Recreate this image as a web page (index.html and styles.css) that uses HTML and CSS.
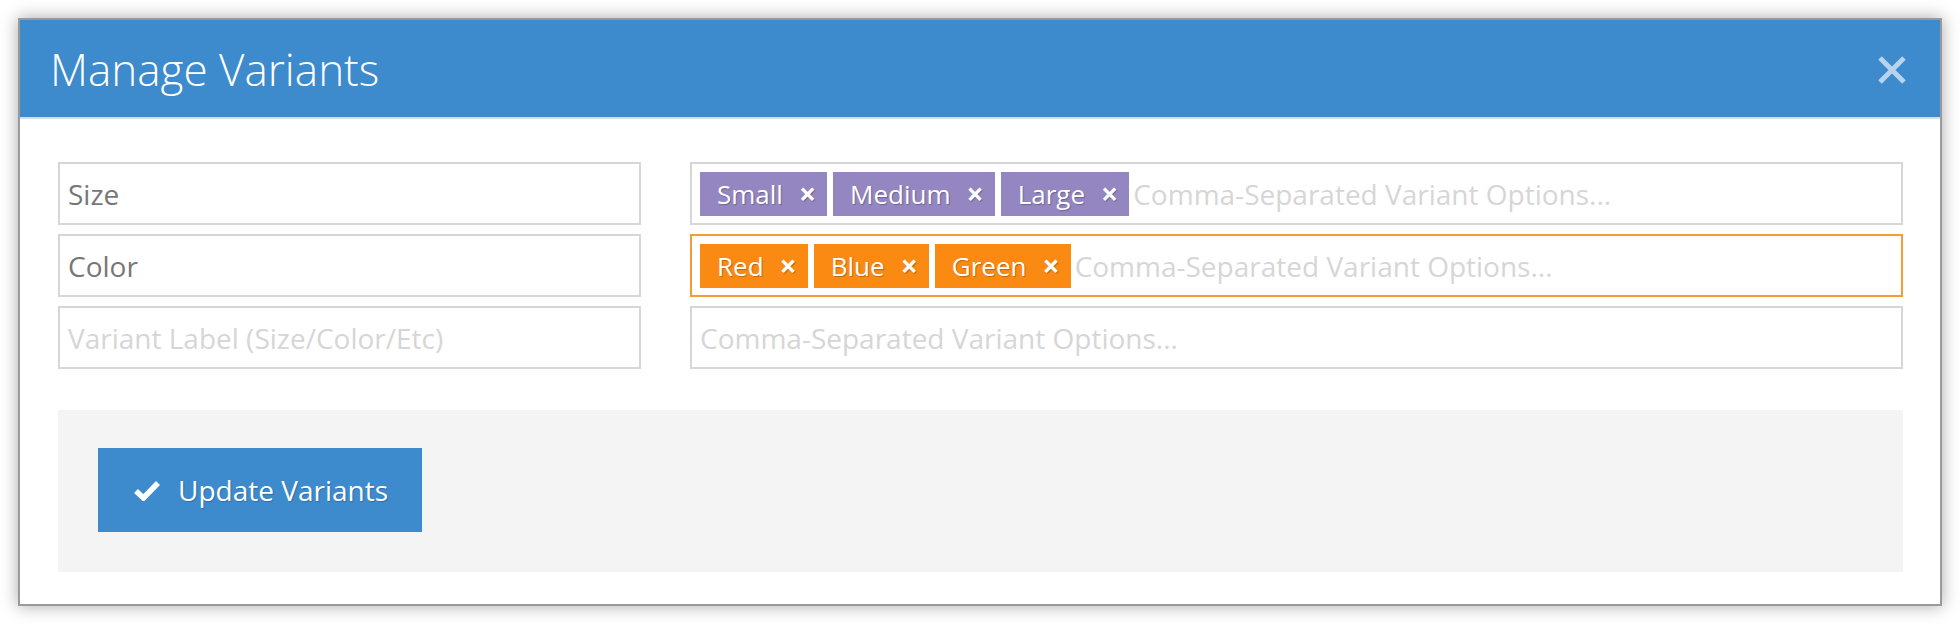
FILE: index.html
```html
<!DOCTYPE html>
<html lang="en">
<head>
  <meta charset="UTF-8">
  <title>Manage Variants</title>
  <link rel="stylesheet" href="styles.css">
</head>
<body>
  <div class="modal">
    <header class="modal-header">
      <h1>Manage Variants</h1>
      <button class="close-btn" aria-label="Close">
        <svg width="30" height="30" viewBox="0 0 30 30"><path d="M3 3 L27 27 M27 3 L3 27" stroke="currentColor" stroke-width="5" stroke-linecap="butt"/></svg>
      </button>
    </header>

    <div class="modal-body">
      <div class="variant-rows">
        <div class="field">Size</div>
        <div class="field tags">
          <span class="tag purple">Small <b>×</b></span>
          <span class="tag purple">Medium <b>×</b></span>
          <span class="tag purple">Large <b>×</b></span>
          <span class="placeholder">Comma-Separated Variant Options...</span>
        </div>

        <div class="field">Color</div>
        <div class="field tags focused">
          <span class="tag orange">Red <b>×</b></span>
          <span class="tag orange">Blue <b>×</b></span>
          <span class="tag orange">Green <b>×</b></span>
          <span class="placeholder">Comma-Separated Variant Options...</span>
        </div>

        <div class="field"><span class="placeholder">Variant Label (Size/Color/Etc)</span></div>
        <div class="field"><span class="placeholder">Comma-Separated Variant Options...</span></div>
      </div>

      <div class="actions">
        <button class="update-btn">
          <svg width="26" height="22" viewBox="0 0 26 22"><path d="M2 12 L9.5 19 L24 4" fill="none" stroke="currentColor" stroke-width="5.5"/></svg>
          Update Variants
        </button>
      </div>
    </div>
  </div>
</body>
</html>
```

FILE: styles.css
```css
body {
  margin: 0;
  padding: 18px;
  background: #fff;
  font-family: 'Open Sans', 'Liberation Sans', sans-serif;
}
.modal {
  border: 2px solid #9a9a9a;
  background: #fff;
  box-shadow: 0 0 16px rgba(0,0,0,0.35);
}
.modal-header {
  background: #3d8acd;
  height: 97px;
  border-bottom: 2px solid #dcdcdc;
  display: flex;
  align-items: center;
  justify-content: space-between;
  padding: 0 33px 0 30px;
}
.modal-header h1 {
  margin: 0;
  color: #fff;
  font-weight: 300;
  font-size: 44px;
}
.close-btn {
  background: none;
  border: none;
  padding: 0;
  color: #b7d3ed;
  display: flex;
  margin-top: 2px;
}
.modal-body { padding: 43px 37px 32px 38px; }
.variant-rows {
  display: grid;
  grid-template-columns: 583px 1fr;
  column-gap: 49px;
  row-gap: 9px;
}
.field {
  height: 63px;
  box-sizing: border-box;
  border: 2px solid #d6d6d6;
  padding: 0 8px;
  display: flex;
  align-items: center;
  gap: 6px;
  font-size: 28px;
  color: #777;
  white-space: nowrap;
  overflow: hidden;
}
.field.focused { border-color: #f59b38; }
.placeholder { color: #d6d6d6; }
.tag {
  height: 44px;
  display: flex;
  align-items: center;
  padding: 0 11px 0 17px;
  color: #fff;
  font-size: 26px;
  text-shadow: 1px 1px 1px rgba(0,0,0,0.25);
}
.tag b { font-weight: 700; font-size: 30px; margin-left: 16px; line-height: 1; }
.tag.purple { background: #9386c1; }
.tag.orange { background: #fb8a13; }
.tags .placeholder { margin-left: -2px; }
.actions {
  margin-top: 41px;
  background: #f4f4f4;
  padding: 38px 40px 40px;
}
.update-btn {
  background: #3d8acd;
  border: none;
  color: #fff;
  width: 324px;
  height: 84px;
  font-family: inherit;
  font-size: 28px;
  display: flex;
  align-items: center;
  gap: 18px;
  padding: 0 0 0 36px;
  text-shadow: 1px 1px 1px rgba(0,0,0,0.2);
}
```
